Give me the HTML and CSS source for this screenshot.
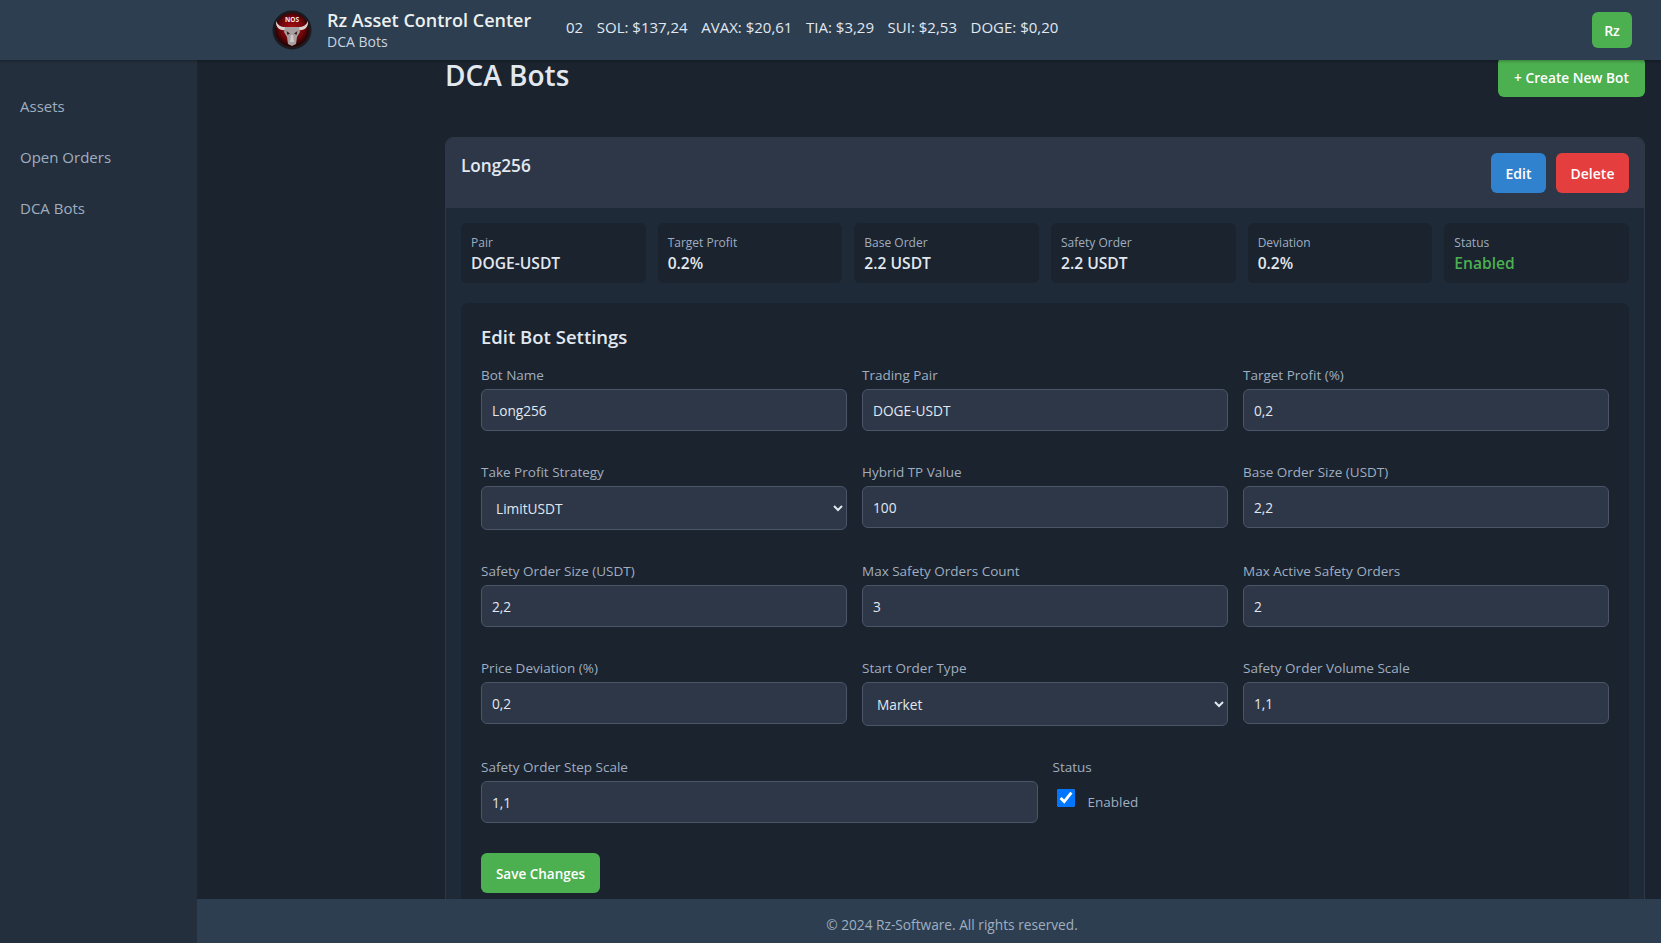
FILE: index.html
```html
<!DOCTYPE html>
<html lang="en">
<head>
    <meta charset="UTF-8">
    <meta name="viewport" content="width=device-width, initial-scale=1.0">
    <title>DCA Bots</title>
    <link rel="stylesheet" href="styles.css">
</head>
<body>
    <header class="topbar">
        <div class="brand">
            <svg class="logo" viewBox="0 0 40 40" width="40" height="40">
                <defs>
                    <radialGradient id="logoRed" cx="50%" cy="45%" r="50%">
                        <stop offset="0%" stop-color="#a80d14"/>
                        <stop offset="70%" stop-color="#6e0509"/>
                        <stop offset="100%" stop-color="#2a0306"/>
                    </radialGradient>
                </defs>
                <circle cx="20" cy="20" r="19.5" fill="#1b1a1e"/>
                <circle cx="20" cy="20" r="17" fill="url(#logoRed)"/>
                <path d="M4 11 C3.500 17 7 21 14 20 L15 17 C10 17.500 6 16 4 11Z" fill="#d8d0cc"/>
                <path d="M36 11 C36.500 17 33 21 26 20 L25 17 C30 17.500 34 16 36 11Z" fill="#d8d0cc"/>
                <path d="M13 17 L27 17 L28 22 L25 27 L24 34 L20 36 L16 34 L15 27 L12 22Z" fill="#a8a0a0"/>
                <path d="M14.500 21 L18 23.500 L15.500 25Z M25.500 21 L22 23.500 L24.500 25Z" fill="#3a2022"/>
                <path d="M19 25 L21 25 L22 32 L18 32Z" fill="#cfc8c6"/>
                <text x="20" y="12" class="logo-text">NOS</text>
            </svg>
            <div>
                <div class="brand-title">Rz Asset Control Center</div>
                <div class="brand-sub">DCA Bots</div>
            </div>
        </div>
        <div class="ticker">
            <span>02</span>
            <span>SOL: $137,24</span>
            <span>AVAX: $20,61</span>
            <span>TIA: $3,29</span>
            <span>SUI: $2,53</span>
            <span>DOGE: $0,20</span>
        </div>
        <button class="user-btn">Rz</button>
    </header>

    <div class="layout">
        <nav class="sidebar">
            <a href="#">Assets</a>
            <a href="#">Open Orders</a>
            <a href="#">DCA Bots</a>
        </nav>

        <div class="content">
            <main class="main">
                <div class="wrap">
                    <div class="page-head">
                        <h1>DCA Bots</h1>
                        <button class="btn btn-green btn-create">+ Create New Bot</button>
                    </div>

                    <section class="bot-card">
                        <div class="bot-head">
                            <h2>Long256</h2>
                            <div class="bot-actions">
                                <button class="btn btn-blue">Edit</button>
                                <button class="btn btn-red">Delete</button>
                            </div>
                        </div>
                        <div class="bot-body">
                            <div class="stats">
                                <div class="stat"><div class="stat-label">Pair</div><div class="stat-value">DOGE-USDT</div></div>
                                <div class="stat"><div class="stat-label">Target Profit</div><div class="stat-value">0.2%</div></div>
                                <div class="stat"><div class="stat-label">Base Order</div><div class="stat-value">2.2 USDT</div></div>
                                <div class="stat"><div class="stat-label">Safety Order</div><div class="stat-value">2.2 USDT</div></div>
                                <div class="stat"><div class="stat-label">Deviation</div><div class="stat-value">0.2%</div></div>
                                <div class="stat"><div class="stat-label">Status</div><div class="stat-value enabled">Enabled</div></div>
                            </div>

                            <form class="edit-panel">
                                <h3>Edit Bot Settings</h3>
                                <div class="form-row">
                                    <div class="field"><label>Bot Name</label><input type="text" value="Long256"></div>
                                    <div class="field"><label>Trading Pair</label><input type="text" value="DOGE-USDT"></div>
                                    <div class="field"><label>Target Profit (%)</label><input type="text" value="0,2"></div>
                                </div>
                                <div class="form-row">
                                    <div class="field"><label>Take Profit Strategy</label><select><option>LimitUSDT</option></select></div>
                                    <div class="field"><label>Hybrid TP Value</label><input type="text" value="100"></div>
                                    <div class="field"><label>Base Order Size (USDT)</label><input type="text" value="2,2"></div>
                                </div>
                                <div class="form-row">
                                    <div class="field"><label>Safety Order Size (USDT)</label><input type="text" value="2,2"></div>
                                    <div class="field"><label>Max Safety Orders Count</label><input type="text" value="3"></div>
                                    <div class="field"><label>Max Active Safety Orders</label><input type="text" value="2"></div>
                                </div>
                                <div class="form-row">
                                    <div class="field"><label>Price Deviation (%)</label><input type="text" value="0,2"></div>
                                    <div class="field"><label>Start Order Type</label><select><option>Market</option></select></div>
                                    <div class="field"><label>Safety Order Volume Scale</label><input type="text" value="1,1"></div>
                                </div>
                                <div class="form-row form-row-two">
                                    <div class="field"><label>Safety Order Step Scale</label><input type="text" value="1,1"></div>
                                    <div class="field">
                                        <label>Status</label>
                                        <div class="check-line"><input type="checkbox" checked><span>Enabled</span></div>
                                    </div>
                                </div>
                                <button type="button" class="btn btn-green btn-save">Save Changes</button>
                            </form>
                        </div>
                    </section>
                </div>
            </main>
            <footer class="footer">© 2024 Rz-Software. All rights reserved.</footer>
        </div>
    </div>
</body>
</html>
```

FILE: styles.css
```css
* {
    box-sizing: border-box;
}
html, body {
    height: 100%;
}
body {
    margin: 0;
    overflow: hidden;
    font-family: "Open Sans", "Noto Sans", Arial, sans-serif;
    background-color: #1a232e;
    color: #e2e8f0;
    display: flex;
    flex-direction: column;
}
button, input, select {
    font-family: inherit;
}

/* top bar */
.topbar {
    height: 60px;
    flex: none;
    display: flex;
    align-items: center;
    padding: 0 29px 0 272px;
    background-color: #2c3e50;
    box-shadow: 0 1px 3px rgba(0,0,0,0.3);
    position: relative;
    z-index: 5;
}
.brand {
    display: flex;
    align-items: center;
    gap: 15px;
    width: 292px;
}
.logo {
    flex: none;
}
.logo-text {
    font-size: 6.500px;
    font-weight: 700;
    fill: #f0e6e4;
    text-anchor: middle;
}
.brand-title {
    font-size: 18px;
    font-weight: 600;
    line-height: 24px;
    margin-top: -1px;
    color: #ecf0f1;
    white-space: nowrap;
}
.brand-sub {
    font-size: 14px;
    line-height: 20px;
    color: #cbd5e0;
}
.ticker {
    display: flex;
    gap: 13.600px;
    flex: 1;
    padding-left: 2px;
    margin-top: -6px;
    font-size: 15px;
    color: #e2e8f0;
    white-space: nowrap;
}
.user-btn {
    width: 40px;
    height: 36px;
    border: none;
    border-radius: 6px;
    background-color: #4caf50;
    color: #fff;
    font-size: 14px;
    font-weight: 600;
}

/* layout */
.layout {
    flex: 1;
    display: flex;
    min-height: 0;
}
.sidebar {
    width: 197px;
    flex: none;
    display: flex;
    flex-direction: column;
    gap: 27px;
    padding: 34px 20px;
    background-color: #232f3c;
}
.sidebar a {
    font-size: 15px;
    line-height: 24px;
    color: #a0aec0;
    text-decoration: none;
}
.content {
    flex: 1;
    min-width: 0;
    display: flex;
    flex-direction: column;
}
.main {
    flex: 1;
    min-height: 0;
    padding-right: 16px;
}
.wrap {
    width: 1200px;
    margin-left: auto;
}

/* page title, scrolled slightly under the top bar */
.page-head {
    display: flex;
    justify-content: space-between;
    align-items: flex-start;
    height: 84px;
    margin-top: -7px;
}
.page-head h1 {
    margin: 6px 0 0;
    font-size: 28px;
    font-weight: 600;
    line-height: 32px;
    color: #e2e8f0;
}

/* buttons */
.btn {
    border: none;
    border-radius: 6px;
    color: #fff;
    font-size: 14px;
    font-weight: 600;
    height: 40px;
    padding: 0 15px;
    white-space: nowrap;
}
.btn-green {
    background-color: #4caf50;
}
.btn-blue {
    background-color: #3182ce;
    width: 55px;
    padding: 0;
}
.btn-red {
    background-color: #e53e3e;
    width: 73px;
    padding: 0;
}
.btn-create {
    width: 147px;
    height: 40px;
    margin-top: 4px;
    padding: 0;
    font-size: 13.700px;
}
.btn-save {
    width: 119px;
    padding: 2px 0 0;
    font-size: 13.500px;
}

/* bot card */
.bot-card {
    background-color: #1e2a38;
    border: 1px solid #2d3748;
    border-radius: 8px;
    overflow: hidden;
}
.bot-head {
    display: flex;
    justify-content: space-between;
    height: 70px;
    padding: 15px;
    background-color: #2d3748;
}
.bot-head h2 {
    margin: 0;
    font-size: 17.200px;
    font-weight: 600;
    line-height: 25px;
}
.bot-actions {
    display: flex;
    gap: 10px;
}
.bot-body {
    padding: 15px;
}
.stats {
    display: grid;
    grid-template-columns: repeat(6, 1fr);
    gap: 12px;
    margin-bottom: 20px;
}
.stat {
    height: 60px;
    padding: 11px 10px 0;
    background-color: #1a232e;
    border-radius: 6px;
}
.stat-label {
    font-size: 12px;
    line-height: 18px;
    color: #a0aec0;
}
.stat-value {
    font-size: 15.600px;
    font-weight: 600;
    line-height: 22px;
    color: #e2e8f0;
}
.stat-value.enabled {
    color: #4caf50;
}

/* edit form */
.edit-panel {
    padding: 20px;
    background-color: #1a232e;
    border-radius: 8px;
}
.edit-panel h3 {
    margin: 0 0 13px;
    font-size: 18.500px;
    font-weight: 600;
    line-height: 28px;
}
.form-row {
    display: grid;
    grid-template-columns: repeat(3, 1fr);
    column-gap: 15px;
    margin-bottom: 30px;
}
.form-row-two {
    grid-template-columns: repeat(2, 1fr);
}
.field label {
    display: block;
    padding-top: 1px;
    margin-bottom: 3px;
    font-size: 13.500px;
    line-height: 21px;
    color: #a0aec0;
}
.field input[type="text"] {
    display: block;
    width: 100%;
    height: 42px;
    padding: 0 10px;
    font-size: 13.700px;
    color: #e2e8f0;
    background-color: #2d3748;
    border: 1px solid #4a5568;
    border-radius: 6px;
}
.field select {
    display: block;
    width: 100%;
    height: 44px;
    padding: 0 10px;
    font-size: 13.700px;
    color: #e2e8f0;
    background-color: #2d3748;
    border: 1px solid #4a5568;
    border-radius: 6px;
}
.check-line {
    display: flex;
    align-items: center;
    gap: 13px;
    margin-top: 7px;
    font-size: 13.500px;
    color: #a0aec0;
}
.check-line input {
    width: 18px;
    height: 18px;
    margin: 0 0 0 4px;
}
.check-line span {
    padding-top: 8px;
}

/* footer */
.footer {
    height: 44px;
    flex: none;
    display: flex;
    align-items: center;
    justify-content: center;
    padding: 6px 0 0 46px;
    font-size: 13.700px;
    color: #a0aec0;
    background-color: #2c3e50;
    position: relative;
    z-index: 2;
}
```
